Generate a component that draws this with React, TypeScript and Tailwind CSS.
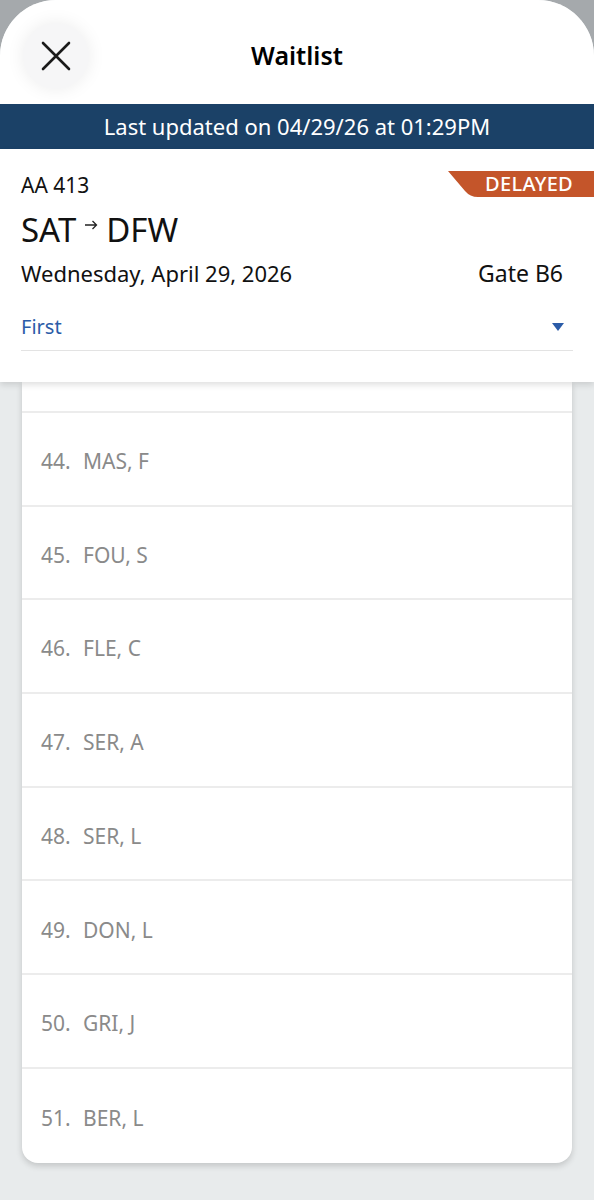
const rows = [
  { n: 44, name: "MAS, F" },
  { n: 45, name: "FOU, S" },
  { n: 46, name: "FLE, C" },
  { n: 47, name: "SER, A" },
  { n: 48, name: "SER, L" },
  { n: 49, name: "DON, L" },
  { n: 50, name: "GRI, J" },
  { n: 51, name: "BER, L" },
];

export default function App() {
  return (
    <div className="h-[1200px] overflow-hidden bg-[#a5a9ac] font-['Noto_Sans',sans-serif]">
      <div className="flex h-full flex-col overflow-hidden rounded-t-[56px] bg-[#e8ebec]">
        {/* title bar */}
        <div className="grid h-[104px] shrink-0 grid-cols-[1fr_auto_1fr] items-center bg-white pt-[8px]">
          <div className="pl-[23px]">
            <button className="flex h-[66px] w-[66px] items-center justify-center rounded-full bg-[#f6f6f7] shadow-[0_0_18px_rgba(0,0,0,0.08)]">
              <svg width="30" height="30" viewBox="0 0 30 30">
                <path d="M2 2 L28 28 M28 2 L2 28" stroke="#1a1a1a" strokeWidth="2.6" strokeLinecap="round" />
              </svg>
            </button>
          </div>
          <h1 className="text-[25px] font-semibold text-black">Waitlist</h1>
          <div />
        </div>

        <div className="flex h-[45px] shrink-0 items-center justify-center bg-[#1b4167] text-[22px] text-white">
          Last updated on 04/29/26 at 01:29PM
        </div>

        {/* flight card */}
        <div className="relative z-10 shrink-0 bg-white px-[21px] pt-[22px] pb-[31px] shadow-[0_3px_6px_rgba(0,0,0,0.12)]">
          <div className="absolute right-0 top-[22px] h-[26px] w-[146px]">
            <svg className="absolute inset-0" width="146" height="26" viewBox="0 0 146 26">
              <path d="M0 0 H146 V26 H30 Q22 26 17 20 Z" fill="#c4552a" />
            </svg>
            <span className="relative flex h-full items-center justify-end pr-[21px] text-[20px] font-medium leading-none tracking-[0.3px] text-white">
              DELAYED
            </span>
          </div>
          <div className="text-[21px] leading-[28px] text-[#111]">AA 413</div>
          <div className="mt-[11px] flex h-[40px] items-center text-[33px] leading-[40px] text-[#111]">
            <span>SAT</span>
            <svg width="14" height="10" viewBox="0 0 14 10" className="mx-[8px] -translate-y-[5px]">
              <path d="M1 5 H12.5 M8.5 1 L12.5 5 L8.5 9" stroke="#222" strokeWidth="1.3" fill="none" />
            </svg>
            <span>DFW</span>
          </div>
          <div className="mt-[8px] flex items-center justify-between text-[22px] leading-[30px] text-[#111]">
            <span>Wednesday, April 29, 2026</span>
            <span className="pr-[10px] text-[23px]">Gate B6</span>
          </div>
          <div className="mt-[25px] flex items-center justify-between border-b border-[#e3e3e3] pb-[9px] text-[20px] leading-[28px] text-[#2b5ca8]">
            <span>First</span>
            <svg width="14" height="10" viewBox="0 0 14 10" className="mr-[8px]">
              <path d="M1 1 H13 L7 9 Z" fill="#2b5ca8" />
            </svg>
          </div>
        </div>

        {/* list */}
        <div className="px-[22px]">
          <div className="overflow-hidden rounded-b-[16px] bg-white shadow-[0_3px_6px_rgba(0,0,0,0.16)]">
            <div className="h-[31px] border-b-2 border-[#ececec]" />
            {rows.map((r, i) => (
              <div
                key={r.n}
                className={
                  "flex h-[93.7px] items-center pl-[19px] pt-[6px] text-[21px] text-[#8a8a8a] " +
                  (i < rows.length - 1 ? "border-b-2 border-[#ececec]" : "")
                }
              >
                <span className="w-[42px]">{r.n}.</span>
                <span>{r.name}</span>
              </div>
            ))}
          </div>
        </div>
      </div>
    </div>
  );
}
